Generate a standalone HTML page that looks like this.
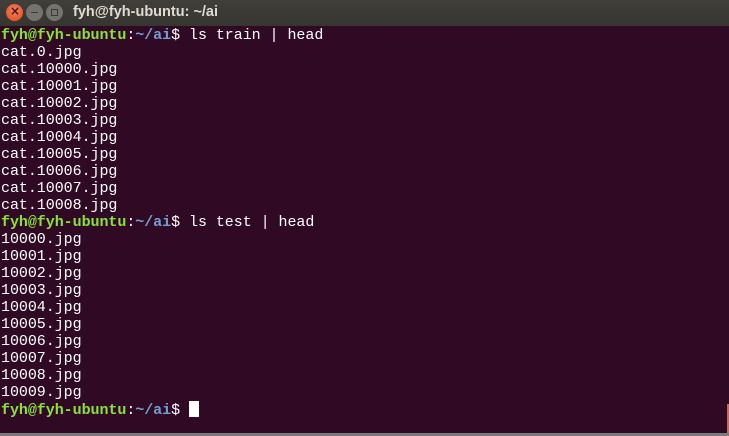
<!DOCTYPE html>
<html><head><meta charset="utf-8"><style>
html,body{margin:0;padding:0;width:729px;height:436px;overflow:hidden;background:#300a24}
.title{position:absolute;left:0;top:0;width:729px;height:26px;background:linear-gradient(#403f3a,#363531);}
.title .t{position:absolute;left:73px;top:4px;color:#dfdbd2;font:bold 14.5px "Liberation Sans",sans-serif;}
.btn{position:absolute;top:4px;width:17px;height:17px;border-radius:50%;}
.term{position:absolute;left:1px;top:27px;font:15px/17px "Liberation Mono",monospace;letter-spacing:-0.05px;color:#fff;white-space:pre;}
.g{color:#8ae234;font-weight:bold}.b{color:#729fcf;font-weight:bold}
.cur{display:inline-block;width:10px;height:16px;background:#fff;vertical-align:-3px}
.bot{position:absolute;left:0;top:433px;width:729px;height:3px;background:#7a7a7a}
.edge{position:absolute;left:727px;top:404px;width:2px;height:29px;background:#d9653b}
</style></head><body>
<div class="title">
<div class="btn" style="left:6px;background:radial-gradient(circle at 50% 40%,#f3805f,#df4a16)"><span style="position:absolute;left:4px;top:0px;font:bold 12px 'DejaVu Sans';color:#3c1a10">×</span></div>
<div class="btn" style="left:26px;background:#75736d"><span style="position:absolute;left:5px;top:8px;width:7px;height:1px;background:#3a3935"></span></div>
<div class="btn" style="left:46px;background:#75736d"><span style="position:absolute;left:5px;top:5px;width:5px;height:5px;border:1px solid #3a3935"></span></div>
<div class="t">fyh@fyh-ubuntu: ~/ai</div>
</div>
<div class="term"><span class="g">fyh@fyh-ubuntu</span>:<span class="b">~/ai</span>$ ls train | head
cat.0.jpg
cat.10000.jpg
cat.10001.jpg
cat.10002.jpg
cat.10003.jpg
cat.10004.jpg
cat.10005.jpg
cat.10006.jpg
cat.10007.jpg
cat.10008.jpg
<span class="g">fyh@fyh-ubuntu</span>:<span class="b">~/ai</span>$ ls test | head
10000.jpg
10001.jpg
10002.jpg
10003.jpg
10004.jpg
10005.jpg
10006.jpg
10007.jpg
10008.jpg
10009.jpg
<span class="g">fyh@fyh-ubuntu</span>:<span class="b">~/ai</span>$ <span class="cur"></span></div>
<div class="edge"></div>
<div class="bot"></div>
</body></html>
